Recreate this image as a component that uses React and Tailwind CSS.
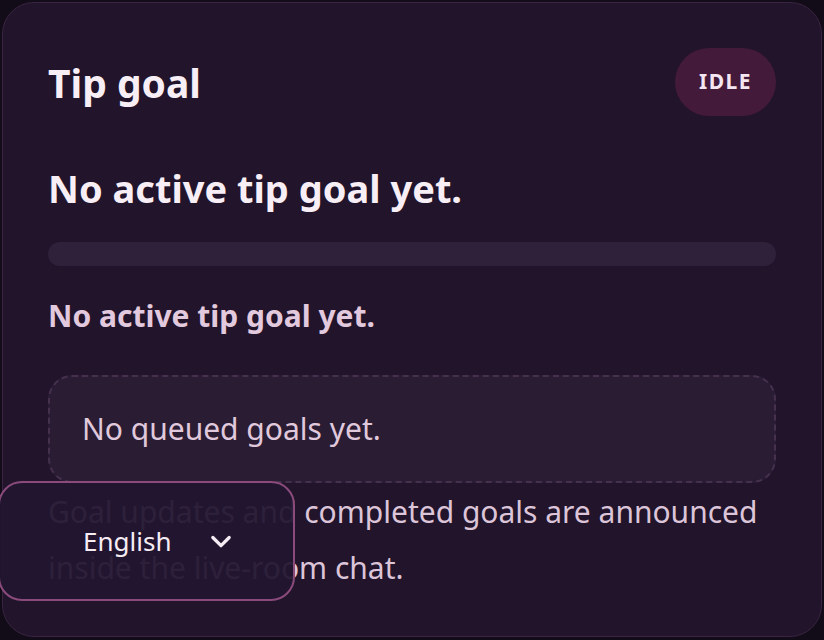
import React from "react";

function Chevron() {
  return (
    <svg width="28" height="28" viewBox="0 0 24 24" fill="none" stroke="currentColor" strokeWidth="2.8" strokeLinecap="round" strokeLinejoin="round">
      <path d="M5 9l7 7 7-7" />
    </svg>
  );
}

export default function App() {
  return (
    <div className="relative h-[640px] w-[824px] overflow-hidden bg-[#120b18] p-[2px]" style={{ fontFamily: '"Noto Sans", "Open Sans", sans-serif' }}>
      <section className="h-[635px] rounded-[32px] border border-[#3a2442] bg-[#21142b] px-[45px] pt-[45px]">
        <div className="flex items-center justify-between">
          <h1 className="text-[39px] font-bold leading-none text-[#f8eef6]">Tip goal</h1>
          <span className="flex h-[68px] items-center rounded-full bg-[#431a3a] px-[24px] text-[21px] font-bold tracking-[0.07em] text-[#f4e6f0]">IDLE</span>
        </div>
        <h2 className="mt-[48px] text-[38px] font-bold leading-[48px] text-[#f8eef6]">No active tip goal yet.</h2>
        <div className="mt-[30px] h-[24px] rounded-full bg-[#2f2139]" />
        <p className="mt-[30px] text-[30px] font-bold leading-[40px] text-[#e2c9dd]">No active tip goal yet.</p>
        <div className="mt-[39px] rounded-[24px] border-2 border-dashed border-[#45304d] bg-[#2a1c33] px-[32px] py-[30px] text-[30px] leading-[44px] text-[#e0c9dc]">
          No queued goals yet.
        </div>
        <p className="-mr-[20px] mt-[1px] whitespace-nowrap text-[30px] leading-[56px] text-[#dcc5d8]">
          Goal updates and completed goals are announced
          <br />
          inside the live-room chat.
        </p>
      </section>

      <div className="absolute left-[-2px] top-[481px] flex h-[120px] w-[297px] items-center gap-[36px] rounded-[24px] border-2 border-[#8a4b7c] bg-[#221530]/[0.94] pl-[83px] text-[#f6ecf4]">
        <span className="text-[26px] leading-none">English</span>
        <Chevron />
      </div>
    </div>
  );
}
